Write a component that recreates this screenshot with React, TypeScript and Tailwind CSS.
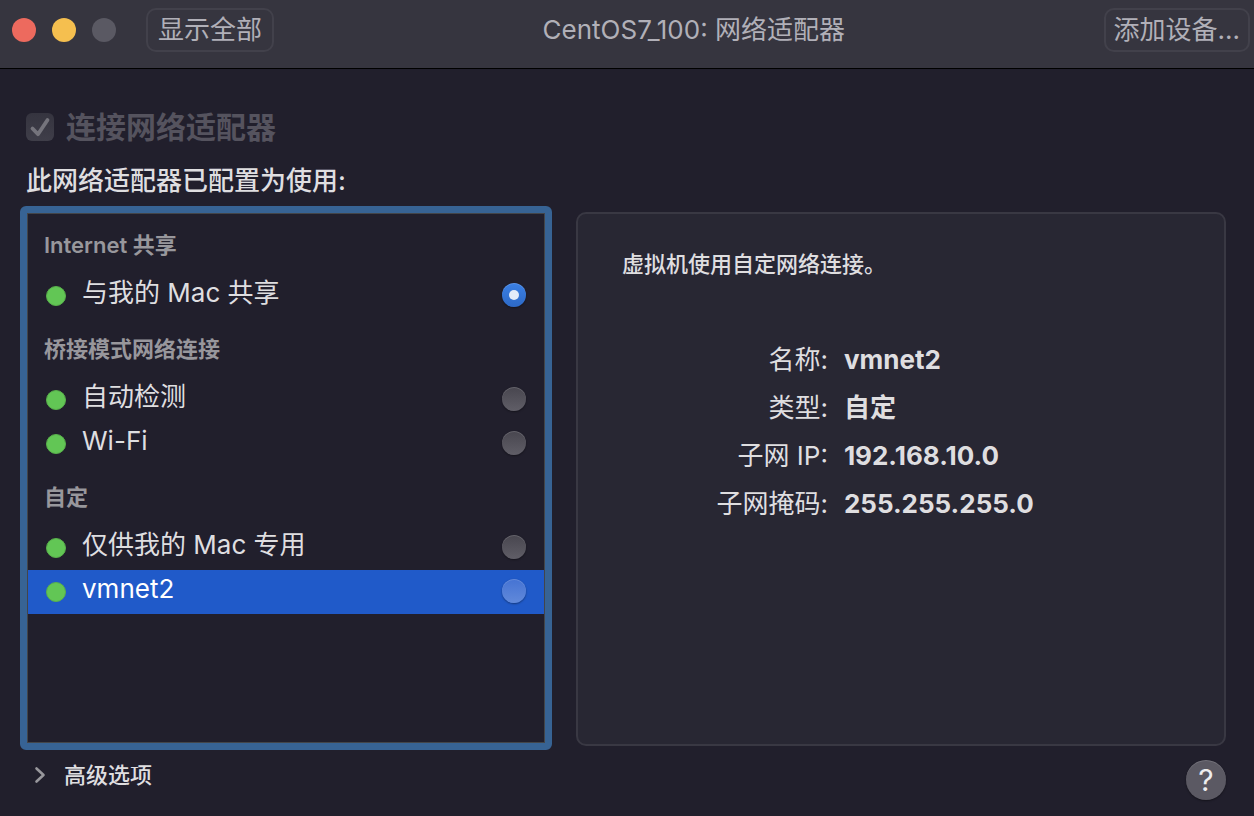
import { useState } from "react";

const groups = [
    {
        title: "Internet 共享",
        items: [{ id: "share", name: "与我的 Mac 共享" }],
    },
    {
        title: "桥接模式网络连接",
        items: [
            { id: "auto", name: "自动检测" },
            { id: "wifi", name: "Wi-Fi" },
        ],
    },
    {
        title: "自定",
        items: [
            { id: "private", name: "仅供我的 Mac 专用" },
            { id: "vmnet2", name: "vmnet2" },
        ],
    },
];

const details = [
    { label: "名称:", value: "vmnet2" },
    { label: "类型:", value: "自定" },
    { label: "子网 IP:", value: "192.168.10.0" },
    { label: "子网掩码:", value: "255.255.255.0" },
];

const TitleBar = () => (
    <header className="flex items-start border-b border-black bg-[#36353f] pt-2 pr-1 pb-4 pl-3 text-[26px] leading-[40px] text-[#b1b0b8]">
        <div className="flex h-11 items-center gap-4">
            <button type="button" aria-label="关闭" className="size-6 rounded-full bg-[#ed6a5e]" />
            <button type="button" aria-label="最小化" className="size-6 rounded-full bg-[#f5bf4f]" />
            <button type="button" aria-label="缩放" disabled className="size-6 rounded-full bg-[#5a5963]" />
        </div>
        <button type="button" className="ml-[30px] rounded-[10px] border-2 border-[#42414b] px-2.5">
            显示全部
        </button>
        <h1 className="flex-1 pt-0.5 pl-2.5 text-center">CentOS7_100: 网络适配器</h1>
        <button type="button" className="rounded-[10px] border-2 border-[#42414b] px-2">
            添加设备...
        </button>
    </header>
);

const NetworkRow = ({ item, selected, checked, onSelect, onCheck }: any) => (
    <div
        onClick={onSelect}
        className={`flex h-11 items-center px-[18px] ${selected ? "bg-[#205ac9] text-white" : ""}`}
    >
        <span className="size-5 rounded-full border border-[#58b04b] bg-[#62c655]" />
        <label htmlFor={item.id} className="ml-4 flex-1 pb-1.5 text-[26px] leading-8">
            {item.name}
        </label>
        <input
            id={item.id}
            type="radio"
            name="network"
            checked={checked}
            onChange={onCheck}
            className={`mb-0.5 grid size-6 appearance-none place-items-center rounded-full bg-linear-to-b shadow-[0_1px_2px_rgba(0,0,0,0.4),inset_0_1px_0_rgba(255,255,255,0.15)] checked:from-[#3b80e5] checked:to-[#2d69c6] checked:before:size-2.5 checked:before:rounded-full checked:before:bg-[#e2ebf9] ${
                selected ? "from-[#4573d3] to-[#6189da]" : "from-[#48464f] to-[#605e67]"
            }`}
        />
    </div>
);

const NetworkList = () => {
    const [selected, setSelected] = useState("vmnet2");
    const [checked, setChecked] = useState("share");

    return (
        <div className="rounded-md border-[7px] border-[#376394]">
            <div className="h-full border border-[#434549]">
                {groups.map((group) => (
                    <section key={group.title}>
                        <h2 className="h-[60px] pt-[15px] pl-4 text-[22px] leading-8 font-semibold text-[#98979c]">
                            {group.title}
                        </h2>
                        {group.items.map((item) => (
                            <NetworkRow
                                key={item.id}
                                item={item}
                                selected={selected === item.id}
                                checked={checked === item.id}
                                onSelect={() => setSelected(item.id)}
                                onCheck={() => setChecked(item.id)}
                            />
                        ))}
                    </section>
                ))}
            </div>
        </div>
    );
};

const NetworkDetails = () => (
    <section className="mt-1.5 mb-1 rounded-[10px] border-2 border-[#393843] bg-[#282733] px-11 pt-[34px]">
        <p className="text-[22px] leading-8 font-medium">虚拟机使用自定网络连接。</p>
        <dl className="mt-14 grid grid-cols-[206px_1fr] gap-x-4 text-[26px] leading-[48px]">
            {details.map(({ label, value }) => (
                <div key={label} className="contents">
                    <dt className="text-right">{label}</dt>
                    <dd className="font-bold">{value}</dd>
                </div>
            ))}
        </dl>
    </section>
);

const App = () => {
    const [advanced, setAdvanced] = useState(false);

    return (
        <div className="flex min-h-screen flex-col bg-[#211f2c] font-['Inter','Noto_Sans_CJK_SC',sans-serif] text-[#dfdee0]">
            <TitleBar />
            <main className="flex flex-1 flex-col pt-[38px] pr-7 pb-4 pl-5">
                <div className="flex items-center gap-3 pl-1.5">
                    <span className="relative size-7">
                        <input
                            id="connect"
                            type="checkbox"
                            defaultChecked
                            disabled
                            className="block size-7 appearance-none rounded-md bg-linear-to-b from-[#35343f] to-[#3f3e49]"
                        />
                        <svg viewBox="0 0 28 28" fill="none" className="pointer-events-none absolute inset-0 size-7">
                            <path d="M6.5 15.5 L12 21.2 L21.5 7" stroke="#75747c" strokeWidth="3.8" strokeLinecap="round" strokeLinejoin="round" />
                        </svg>
                    </span>
                    <label htmlFor="connect" className="text-[30px] leading-10 font-bold text-[#55535e]">
                        连接网络适配器
                    </label>
                </div>
                <p className="mt-4 pl-1.5 text-[26px] leading-9 font-medium">此网络适配器已配置为使用:</p>
                <div className="mt-[7px] grid flex-1 grid-cols-[9fr_11fr] gap-6">
                    <NetworkList />
                    <NetworkDetails />
                </div>
                <footer className="mt-2.5 flex items-start justify-between">
                    <button
                        type="button"
                        aria-expanded={advanced}
                        onClick={() => setAdvanced(!advanced)}
                        className="flex items-center gap-4 pl-3 text-[22px] leading-[30px] font-medium"
                    >
                        <svg viewBox="0 0 16 20" fill="none" className="h-5 w-4">
                            <path d="M4.5 3.5 L11.5 10 L4.5 16.5" stroke="#98979c" strokeWidth="2.6" strokeLinecap="round" strokeLinejoin="round" />
                        </svg>
                        高级选项
                    </button>
                    <button
                        type="button"
                        aria-label="帮助"
                        className="size-10 rounded-full bg-[#5b5963] text-[30px] leading-10 text-[#eeedef] shadow-[0_1px_2px_rgba(0,0,0,0.4),inset_0_1px_0_rgba(255,255,255,0.15)]"
                    >
                        ?
                    </button>
                </footer>
            </main>
        </div>
    );
};

export default App;
